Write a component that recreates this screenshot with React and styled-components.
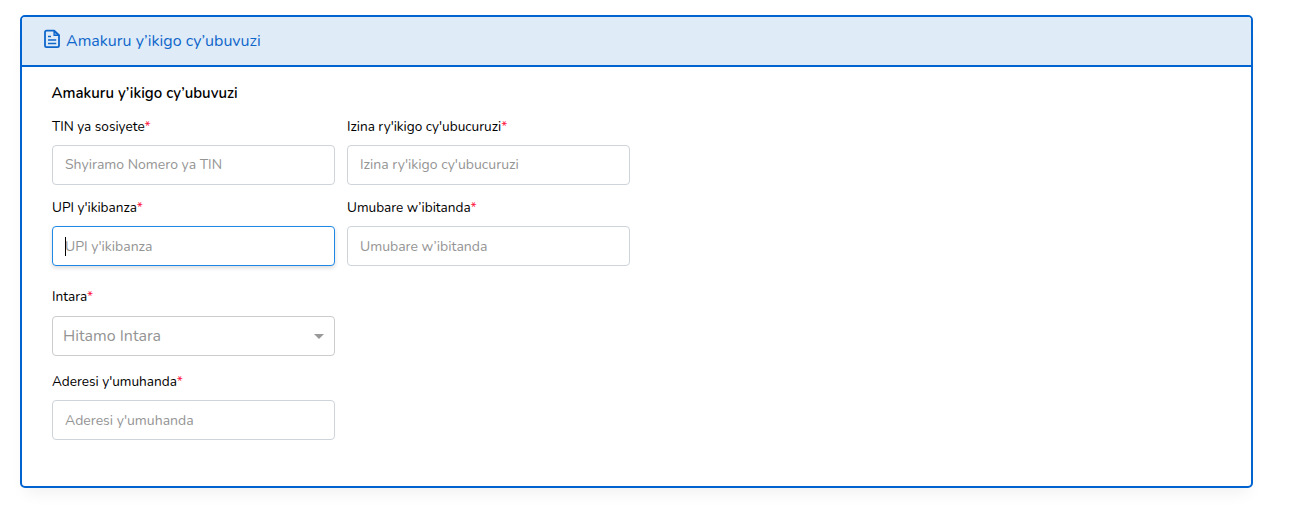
import React from 'react';
import styled, { createGlobalStyle } from 'styled-components';

const Global = createGlobalStyle`
  * { box-sizing: border-box; }
  body { margin: 0; background: #fff; color: #000; font-family: Nunito, Lato, sans-serif; }
`;

const Page = styled.main`
  height: 509px;
  padding: 15px 38px 21px 20px;
`;

const Card = styled.section`
  height: 473px;
  border: 2px solid #0063cf;
  border-radius: 5px;
  background: #fff;
  box-shadow: 0 10px 15px -5px rgba(0, 0, 0, 0.06);
`;

const CardHeader = styled.header`
  display: flex;
  align-items: flex-start;
  gap: 6px;
  height: 50px;
  padding: 12px 22px 0;
  border-bottom: 2px solid #0063cf;
  border-radius: 3px 3px 0 0;
  background: #dfebf7;
  color: #0f67cb;
`;

const HeaderIcon = styled.svg`
  width: 16px;
  height: 20px;
  flex: none;
`;

const HeaderTitle = styled.span`
  font-size: 16px;
  line-height: 24px;
  white-space: nowrap;
`;

const Body = styled.form`
  padding: 15px 30px 0;
`;

const SectionTitle = styled.h2`
  margin: 0 0 13px;
  font-size: 15px;
  font-weight: 600;
  line-height: 22px;
  text-indent: -0.5px;
`;

const Row = styled.div`
  display: flex;
  gap: 12px;
  margin-bottom: ${(p) => p.$after}px;
`;

const Field = styled.div`
  width: 283px;
`;

const Label = styled.label`
  display: block;
  height: 20px;
  margin-bottom: ${(p) => p.$gap || 8}px;
  font-size: 13.6px;
  line-height: 20px;
  white-space: nowrap;
`;

const Required = styled.span`
  color: #ff1744;
`;

const Control = styled.div`
  position: relative;
  display: flex;
  height: 40px;
`;

const Input = styled.input`
  width: 100%;
  height: 40px;
  padding: 0 12px ${(p) => (p.$raised ? 2 : 0)}px;
  border: 1px solid ${(p) => (p.$active ? '#1e88e5' : '#ced4da')};
  border-radius: 4px;
  outline: none;
  background: #fff;
  box-shadow: ${(p) => (p.$active ? '0 2px 4px rgba(0, 0, 0, 0.14)' : 'none')};
  font: 14px Nunito, Lato, sans-serif;
  &::placeholder { color: #949494; opacity: 1; }
`;

const Caret = styled.span`
  position: absolute;
  left: 13px;
  top: 11px;
  width: 1px;
  height: 19px;
  background: #000;
`;

const Select = styled.div`
  display: flex;
  align-items: center;
  justify-content: space-between;
  width: 100%;
  padding: 0 10px;
  border: 1px solid #ccc;
  border-radius: 4px;
  color: #949494;
  font-size: 16px;
`;

const Arrow = styled.span`
  border: 5px solid transparent;
  border-top-color: #999;
  border-bottom: 0;
`;

function TextField({ label, placeholder, active, raised }) {
  return (
    <Field>
      <Label>{label}<Required>*</Required></Label>
      <Control>
        <Input placeholder={placeholder} $active={active} $raised={raised} />
        {active && <Caret />}
      </Control>
    </Field>
  );
}

export default function App() {
  return (
    <>
      <Global />
      <Page>
        <Card>
          <CardHeader>
            <HeaderIcon viewBox="0 0 16 20" fill="none" stroke="currentColor" strokeWidth="1.8" strokeLinejoin="round">
              <path d="M10.2 1.7H2.6Q1 1.7 1 3.3V16.6Q1 18.2 2.6 18.2H13.4Q15 18.2 15 16.6V6.2Z" />
              <path d="M10 1.7V6.4H15Z" fill="currentColor" fillOpacity="0.55" strokeWidth="1.2" />
              <path d="M4 7.5H7M4 11H12.2M4 14.5H12.2" strokeWidth="1.5" />
            </HeaderIcon>
            <HeaderTitle>Amakuru y’ikigo cy’ubuvuzi</HeaderTitle>
          </CardHeader>
          <Body>
            <SectionTitle>Amakuru y’ikigo cy’ubuvuzi</SectionTitle>
            <Row $after={13}>
              <TextField label="TIN ya sosiyete" placeholder="Shyiramo Nomero ya TIN" raised />
              <TextField label="Izina ry'ikigo cy'ubucuruzi" placeholder="Izina ry'ikigo cy'ubucuruzi" raised />
            </Row>
            <Row $after={21}>
              <TextField label="UPI y'ikibanza" placeholder="UPI y'ikibanza" active />
              <TextField label="Umubare w’ibitanda" placeholder="Umubare w’ibitanda" />
            </Row>
            <Row $after={16}>
              <Field>
                <Label $gap={9}>Intara<Required>*</Required></Label>
                <Control><Select>Hitamo Intara<Arrow /></Select></Control>
              </Field>
            </Row>
            <Row $after={0}>
              <TextField label="Aderesi y'umuhanda" placeholder="Aderesi y'umuhanda" />
            </Row>
          </Body>
        </Card>
      </Page>
    </>
  );
}
